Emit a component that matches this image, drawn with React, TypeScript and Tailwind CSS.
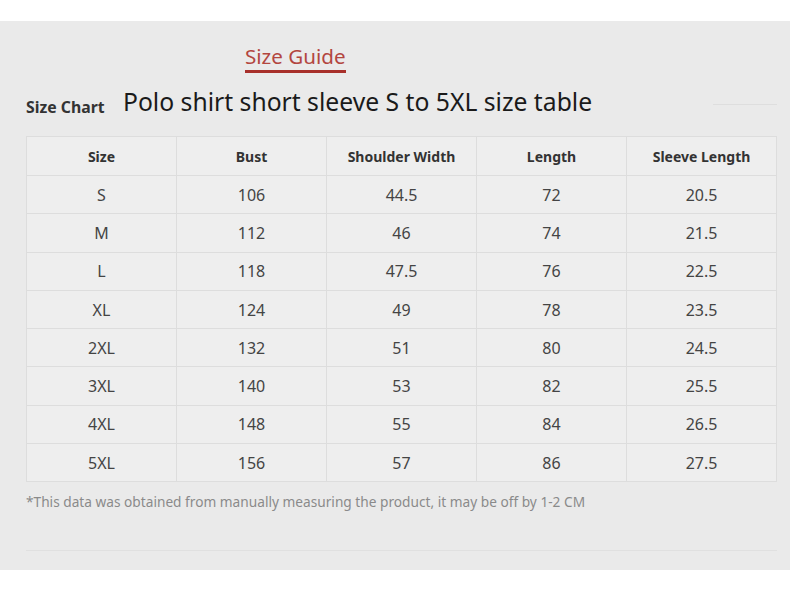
const rows = [
  ['S', '106', '44.5', '72', '20.5'],
  ['M', '112', '46', '74', '21.5'],
  ['L', '118', '47.5', '76', '22.5'],
  ['XL', '124', '49', '78', '23.5'],
  ['2XL', '132', '51', '80', '24.5'],
  ['3XL', '140', '53', '82', '25.5'],
  ['4XL', '148', '55', '84', '26.5'],
  ['5XL', '156', '57', '86', '27.5'],
];

const headers = ['Size', 'Bust', 'Shoulder Width', 'Length', 'Sleeve Length'];

export default function App() {
  return (
    <div className="w-[790px] h-[593px] bg-white font-['Noto_Sans',sans-serif]">
      <div className="h-[21px]" />
      <div className="h-[549px] bg-[#eaeaea] pl-[26px] pr-[13px] flex flex-col">
        {/* Title */}
        <div className="pl-[219px] pt-[22px]">
          <div className="inline-flex flex-col">
            <span className="text-[20.6px] leading-[26px] text-[#b3463f]">Size Guide</span>
            <span className="h-[3px] bg-[#a8302b] mt-[1px]" />
          </div>
        </div>
        <div className="flex items-end mt-[13px] h-[31px]">
          <span className="text-[15.8px] font-bold text-[#333] leading-[20px] w-[97px]">Size Chart</span>
          <span className="text-[24.7px] text-[#1a1a1a] leading-[31px]">Polo shirt short sleeve S to 5XL size table</span>
          <span className="ml-auto mb-[12px] w-[64px] h-[1px] bg-[#dedede]" />
        </div>

        {/* Table */}
        <div className="mt-[19px] w-[751px] border-t border-l border-[#dddddd] bg-[#eeeeee]">
          <div className="grid grid-cols-5">
            {headers.map((h) => (
              <div key={h} className="h-[39px] flex items-center justify-center border-r border-b border-[#dddddd] text-[14px] font-bold text-[#333]">
                {h}
              </div>
            ))}
          </div>
          {rows.map((r) => (
            <div key={r[0]} className="grid grid-cols-5">
              {r.map((c, i) => (
                <div key={i} className="h-[38.3px] flex items-center justify-center border-r border-b border-[#dddddd] text-[16px] text-[#444]">
                  {c}
                </div>
              ))}
            </div>
          ))}
        </div>

        <p className="mt-[10px] text-[13.7px] text-[#8a8a8a] leading-[20px]">
          *This data was obtained from manually measuring the product, it may be off by 1-2 CM
        </p>
        <div className="mt-[38px] w-[751px] h-[1px] bg-[#e0e0e0]" />
      </div>
    </div>
  );
}
